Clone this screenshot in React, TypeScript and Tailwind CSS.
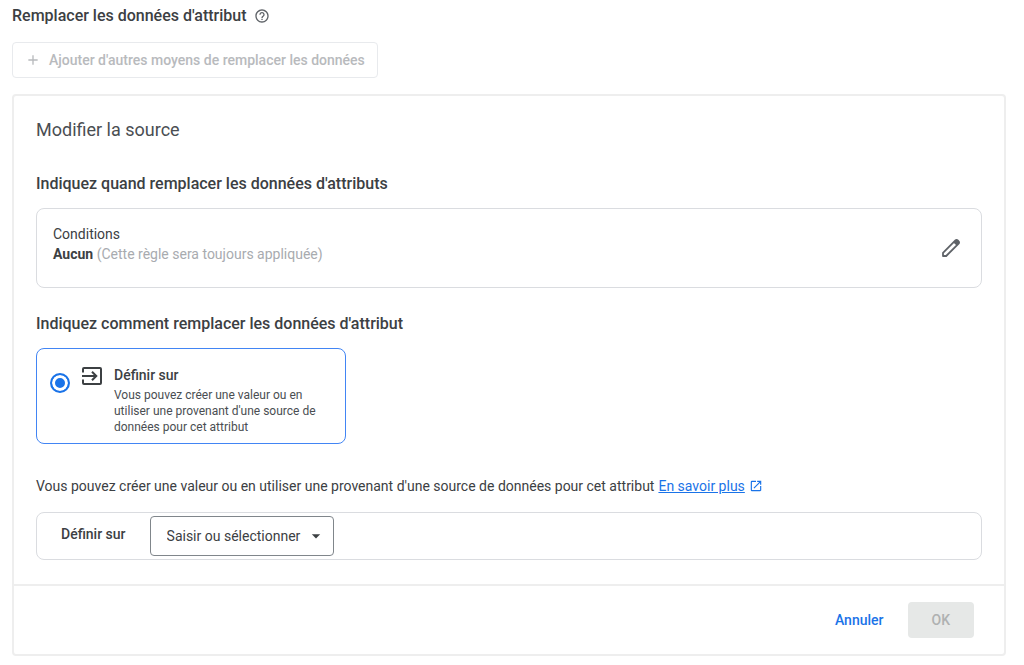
import { useState } from "react";
import {
  MdAdd,
  MdArrowDropDown,
  MdHelpOutline,
  MdOpenInNew,
} from "react-icons/md";

const PencilIcon = () => (
  <svg viewBox="0 0 20 20" className="w-5 h-5" fill="none" aria-hidden="true">
    <path
      d="M2 18v-3.2L14.4 2.4a1.6 1.6 0 0 1 2.3 0l.9.9a1.6 1.6 0 0 1 0 2.3L5.2 18z"
      stroke="currentColor"
      strokeWidth="1.8"
      strokeLinejoin="round"
    />
    <path
      d="M12.4 4.4l2-2a1.6 1.6 0 0 1 2.3 0l.9.9a1.6 1.6 0 0 1 0 2.3l-2 2z"
      fill="currentColor"
    />
  </svg>
);

const InputIcon = () => (
  <svg viewBox="0 0 20 18" className="w-5 shrink-0" fill="none" aria-hidden="true">
    <path
      d="M1 5.5V2a1 1 0 0 1 1-1h16a1 1 0 0 1 1 1v14a1 1 0 0 1-1 1H2a1 1 0 0 1-1-1v-3.5M0 9h14M10 4.7L14.3 9 10 13.3"
      stroke="currentColor"
      strokeWidth="2"
    />
  </svg>
);

const App = () => {
  const [source, setSource] = useState("");

  return (
    <main className="pt-1 pb-4 pl-3 pr-[18px] bg-white font-['Roboto',sans-serif] text-sm text-[#3c4043]">
      <div className="flex items-center gap-x-2">
        <h1 className="text-base font-medium">
          Remplacer les données d'attribut
        </h1>
        <button type="button" aria-label="Aide" className="text-[#5f6368]">
          <MdHelpOutline className="w-4 h-4" />
        </button>
      </div>

      <button
        type="button"
        disabled
        className="flex items-center h-9 px-3 mt-[14px] font-medium border rounded border-[#e8eaed] text-[#b8babd] gap-x-2"
      >
        <MdAdd className="w-4 h-4" />
        Ajouter d'autres moyens de remplacer les données
      </button>

      <section className="mt-4 border-2 rounded border-[#eeeeee]">
        <div className="px-[22px] pt-5 pb-6">
          <h2 className="text-lg leading-7 text-[#4a4e52]">Modifier la source</h2>

          <h3 className="mt-7 text-base font-medium">
            Indiquez quand remplacer les données d'attributs
          </h3>
          <div className="flex items-center justify-between h-20 px-4 mt-3 border rounded-lg border-[#dadce0]">
            <div className="pb-2 leading-5">
              <p>Conditions</p>
              <p>
                <b>Aucun</b>{" "}
                <span className="text-[#a8abaf]">
                  (Cette règle sera toujours appliquée)
                </span>
              </p>
            </div>
            <button
              type="button"
              aria-label="Modifier"
              className="mr-1 text-[#5f6368]"
            >
              <PencilIcon />
            </button>
          </div>

          <h3 className="mt-6 text-base font-medium">
            Indiquez comment remplacer les données d'attribut
          </h3>
          <label className="flex items-start w-[310px] pl-[13px] pr-4 pt-4 pb-2 mt-3 border rounded-lg border-[#4285f4]">
            <input
              type="radio"
              name="mode"
              defaultChecked
              className="w-5 h-5 mt-2 mr-3 bg-[#1a73e8] border-2 rounded-full appearance-none shrink-0 border-[#1a73e8] shadow-[inset_0_0_0_3px_white]"
            />
            <span className="flex gap-x-3">
              <span className="pt-[2px]">
                <InputIcon />
              </span>
              <span>
                <span className="block font-medium leading-5">Définir sur</span>
                <span className="block mt-[2px] text-xs leading-4 text-[#4a4e52]">
                  Vous pouvez créer une valeur ou en utiliser une provenant
                  d'une source de données pour cet attribut
                </span>
              </span>
            </span>
          </label>

          <p className="flex flex-wrap items-center mt-8 leading-5 gap-x-1">
            Vous pouvez créer une valeur ou en utiliser une provenant d'une
            source de données pour cet attribut
            <a href="#" className="flex items-center text-[#1a73e8] gap-x-1">
              <span className="underline">En savoir plus</span>
              <MdOpenInNew className="w-[14px] h-[14px]" />
            </a>
          </p>

          <div className="flex items-center h-12 pl-6 mt-4 border rounded-lg border-[#dadce0] gap-x-6">
            <label htmlFor="source" className="pb-1 font-medium">
              Définir sur
            </label>
            <div className="relative">
              <select
                id="source"
                value={source}
                onChange={(e) => setSource(e.target.value)}
                className="h-10 pl-4 pr-8 bg-white border rounded appearance-none border-[#80868b]"
              >
                <option value="">Saisir ou sélectionner</option>
              </select>
              <MdArrowDropDown className="absolute w-5 h-5 pointer-events-none right-2 top-[10px]" />
            </div>
          </div>
        </div>

        <div className="flex justify-end px-[30px] py-4 border-t-2 border-[#eeeeee] gap-x-6">
          <button type="button" className="font-medium text-[#1a73e8]">
            Annuler
          </button>
          <button
            type="button"
            disabled
            className="h-9 px-6 font-medium rounded bg-[#e6e8e7] text-[#afb1b1]"
          >
            OK
          </button>
        </div>
      </section>
    </main>
  );
};

export default App;
